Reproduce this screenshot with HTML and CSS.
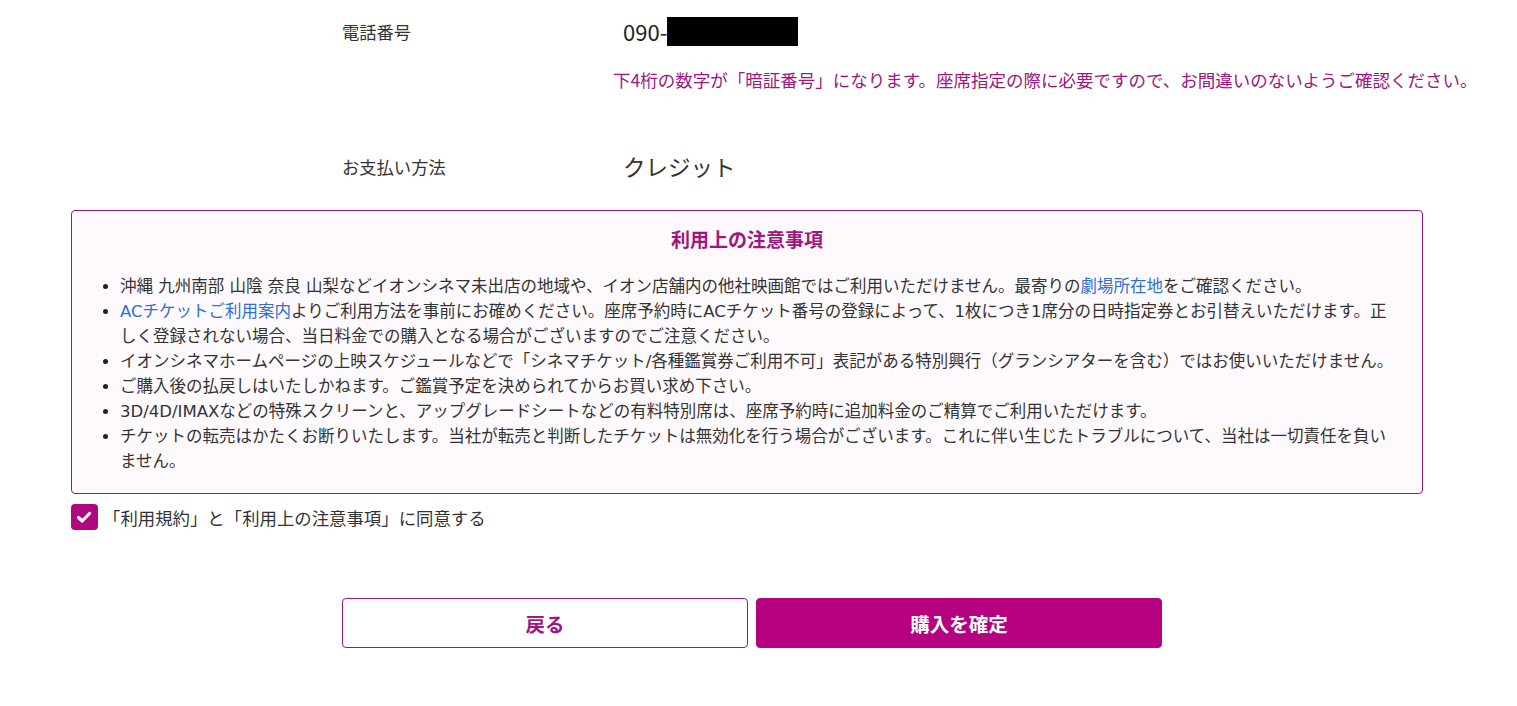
FILE: index.html
```html
<!DOCTYPE html>
<html lang="ja">
<head>
<meta charset="utf-8">
<title>購入確認</title>
<link rel="stylesheet" href="styles.css">
</head>
<body>
<div class="page">
  <section class="info">
    <div class="row">
      <div class="label">電話番号</div>
      <div class="value phone">090-<span class="mask"></span></div>
    </div>
    <p class="note">下4桁の数字が「暗証番号」になります。座席指定の際に必要ですので、お間違いのないようご確認ください。</p>
    <div class="row row-pay">
      <div class="label">お支払い方法</div>
      <div class="value pay">クレジット</div>
    </div>
  </section>

  <section class="notice">
    <h2 class="notice-title">利用上の注意事項</h2>
    <ul class="notice-list">
      <li>沖縄 九州南部 山陰 奈良 山梨などイオンシネマ未出店の地域や、イオン店舗内の他社映画館ではご利用いただけません。最寄りの<a class="link" href="#">劇場所在地</a>をご確認ください。</li>
      <li><a class="link" href="#">ACチケットご利用案内</a>よりご利用方法を事前にお確めください。座席予約時にACチケット番号の登録によって、1枚につき1席分の日時指定券とお引替えいただけます。正しく登録されない場合、当日料金での購入となる場合がございますのでご注意ください。</li>
      <li>イオンシネマホームページの上映スケジュールなどで「シネマチケット/各種鑑賞券ご利用不可」表記がある特別興行（グランシアターを含む）ではお使いいただけません。</li>
      <li>ご購入後の払戻しはいたしかねます。ご鑑賞予定を決められてからお買い求め下さい。</li>
      <li>3D/4D/IMAXなどの特殊スクリーンと、アップグレードシートなどの有料特別席は、座席予約時に追加料金のご精算でご利用いただけます。</li>
      <li>チケットの転売はかたくお断りいたします。当社が転売と判断したチケットは無効化を行う場合がございます。これに伴い生じたトラブルについて、当社は一切責任を負いません。</li>
    </ul>
  </section>

  <label class="agree">
    <span class="check">
      <svg viewBox="0 0 26 26" width="26" height="26"><path d="M7.5 13.5 L11.2 17 L18.5 9.5" fill="none" stroke="#fff" stroke-width="3.2" stroke-linecap="round" stroke-linejoin="round"/></svg>
    </span>
    <span class="agree-text">「利用規約」と「利用上の注意事項」に同意する</span>
  </label>

  <div class="buttons">
    <button class="btn btn-back" type="button">戻る</button>
    <button class="btn btn-confirm" type="button">購入を確定</button>
  </div>
</div>
</body>
</html>
```

FILE: styles.css
```css
* { box-sizing: border-box; }
html, body { margin: 0; padding: 0; background: #fff; }
body {
  font-family: "Noto Sans CJK JP", "Noto Sans", sans-serif;
  color: #333;
}
.page { padding-top: 10px; }

.info { margin-left: 342px; }
.row {
  display: grid;
  grid-template-columns: 271px 1fr;
  align-items: center;
  height: 42px;
}
.label { font-size: 17.3px; color: #333; }
.value { padding-left: 10px; color: #222; }
.phone {
  font-size: 22px;
  display: flex;
  align-items: center;
}
.mask {
  display: inline-block;
  width: 131px;
  height: 29px;
  background: #000;
}
.note {
  margin: 14px 0 0 271px;
  font-size: 17.5px;
  line-height: 28px;
  color: #a0157f;
  white-space: nowrap;
}
.row-pay { margin-top: 51px; }
.pay { font-size: 22.5px; color: #333; }

.notice {
  margin: 23px 0 0 71px;
  width: 1352px;
  border: 1px solid #a0157f;
  border-radius: 4px;
  background: #fef9fd;
  padding: 15px 0 19px 0;
}
.notice-title {
  margin: 0;
  text-align: center;
  font-size: 19px;
  line-height: 26px;
  font-weight: 700;
  color: #a0157f;
}
.notice-list {
  margin: 22px 0 0 0;
  padding: 0 24px 0 48px;
  font-family: "DejaVu Sans", "Noto Sans CJK JP", sans-serif;
  font-size: 16.5px;
  line-height: 25px;
  color: #333;
}
.notice-list li::marker {
  font-family: "Liberation Sans", sans-serif;
  font-size: 17px;
  color: #222;
}
.link { color: #2f6fd5; text-decoration: none; }

.agree {
  display: flex;
  align-items: center;
  gap: 5px;
  margin: 10px 0 0 71px;
  cursor: pointer;
}
.check {
  display: block;
  width: 27px;
  height: 26px;
  border-radius: 4px;
  background: #b0077f;
}
.check svg { display: block; }
.agree-text { font-size: 17.4px; color: #333; }

.buttons {
  display: flex;
  gap: 8px;
  margin: 68px 0 0 342px;
}
.btn {
  width: 406px;
  height: 50px;
  border-radius: 4px;
  font-family: "Noto Sans CJK JP", "Noto Sans", sans-serif;
  font-size: 19.5px;
  font-weight: 700;
  cursor: pointer;
}
.btn-back {
  background: #fff;
  border: 1px solid #a0157f;
  color: #a0157f;
}
.btn-confirm {
  background: #b5007f;
  border: 1px solid #b5007f;
  color: #fff;
}
```
